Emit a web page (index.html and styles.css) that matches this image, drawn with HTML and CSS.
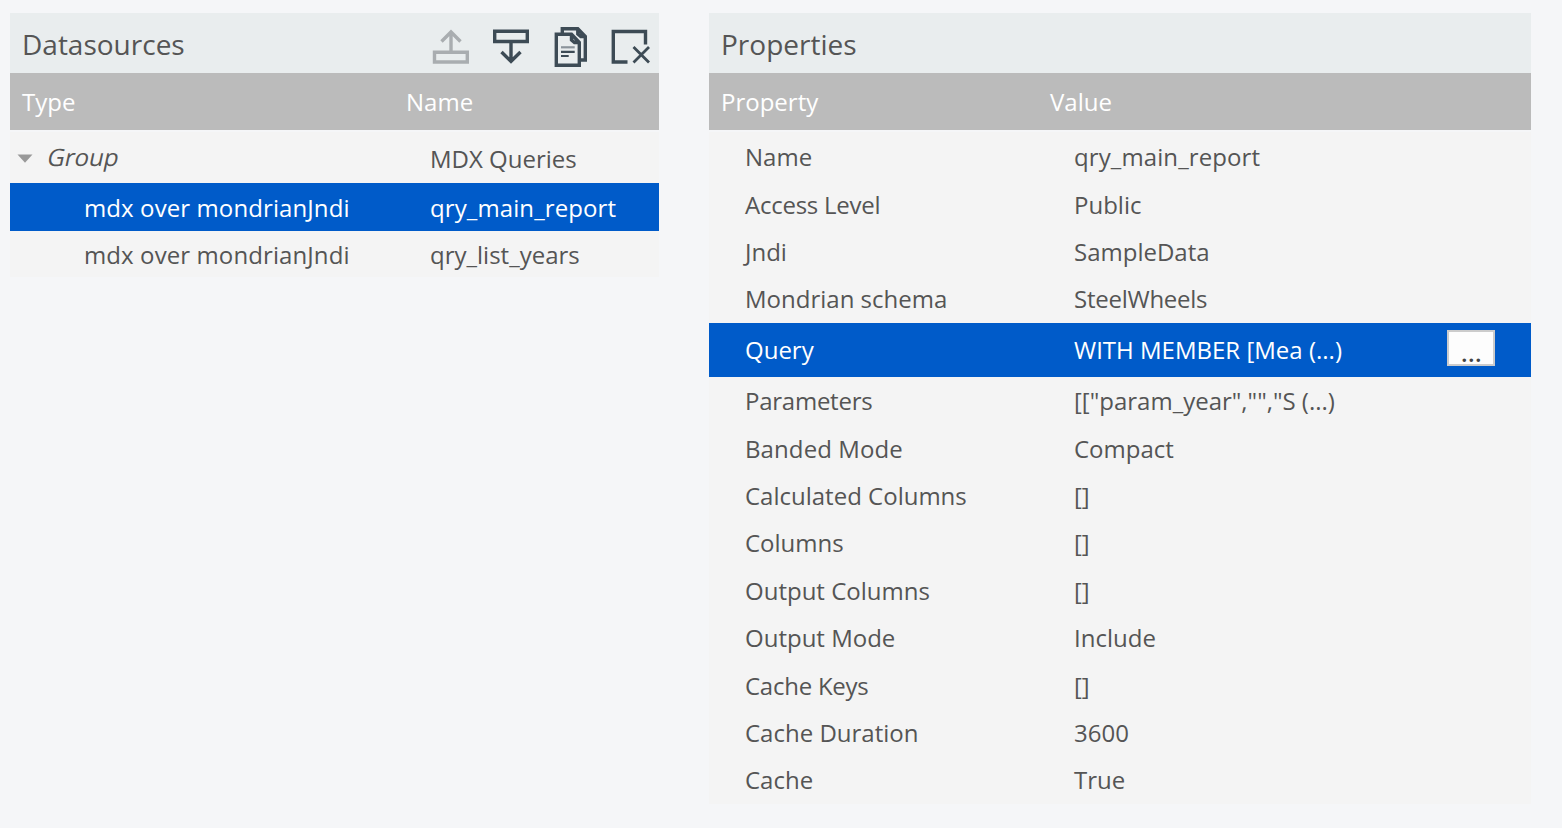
FILE: index.html
```html
<!DOCTYPE html>
<html lang="en">
<head>
<meta charset="utf-8">
<title>Datasources</title>
<link rel="stylesheet" href="styles.css">
</head>
<body>
<main class="workspace">
  <section class="panel datasources">
    <header class="panel-title">
      <h2>Datasources</h2>
      <div class="toolbar">
        <svg class="icon disabled" viewBox="0 0 40 60"><path d="M3.5 39.2h32.8v9.8H3.5zM20 38V19.5M10.5 28.5L20 19l9.500 9.500"/></svg>
        <svg class="icon" viewBox="0 0 40 60"><path d="M3.700 18.200h32.600v10.300H3.700zM20 29v19M10.500 39l9.500 9.300 9.500-9.300"/></svg>
        <svg class="icon" viewBox="0 0 40 60"><path d="M5.300 21.300H20.500L28.300 29.500V52.200H5.300zM20.500 21.500v5.500l3 2.500h4.500M11.300 20.500V15.700H26.800L34.300 23.500V47H29.500M26.800 16v5l3 2.500h4.500"/><path class="fine" d="M10 38.800h13.700M10 43h7.700"/><path class="fine pale" d="M10 34.300h13.700"/></svg>
        <svg class="icon" viewBox="0 0 40 60"><path d="M34.500 31.500V18.500H2.300V49H16.500"/><path class="cross" d="M22.500 34l15.500 15.500M38 34L22.500 49.500"/></svg>
      </div>
    </header>
    <div class="row head"><span>Type</span><span>Name</span></div>
    <div class="rows">
      <div class="row group"><span class="group-label"><svg class="arrow" viewBox="0 0 16 9"><path d="M.5.500h15L8 8.800z"/></svg><span class="slanted">Group</span></span><span>MDX Queries</span></div>
      <div class="row child selected"><span class="loose">mdx over mondrianJndi</span><span class="loose">qry_main_report</span></div>
      <div class="row child"><span class="loose">mdx over mondrianJndi</span><span>qry_list_years</span></div>
    </div>
  </section>
  <section class="panel properties">
    <header class="panel-title"><h2>Properties</h2></header>
    <div class="row head"><span>Property</span><span>Value</span></div>
    <div class="rows">
      <div class="row"><span>Name</span><span class="loose">qry_main_report</span></div>
      <div class="row"><span class="tight">Access Level</span><span>Public</span></div>
      <div class="row"><span>Jndi</span><span>SampleData</span></div>
      <div class="row"><span>Mondrian schema</span><span class="tight">SteelWheels</span></div>
      <div class="row selected"><span>Query</span><span>WITH MEMBER [Mea (...)</span><button class="more">...</button></div>
      <div class="row"><span class="tight">Parameters</span><span>[["param_year","","S (...)</span></div>
      <div class="row"><span class="loose">Banded Mode</span><span>Compact</span></div>
      <div class="row"><span>Calculated Columns</span><span>[]</span></div>
      <div class="row"><span>Columns</span><span>[]</span></div>
      <div class="row"><span>Output Columns</span><span>[]</span></div>
      <div class="row"><span>Output Mode</span><span>Include</span></div>
      <div class="row"><span class="tight">Cache Keys</span><span>[]</span></div>
      <div class="row"><span>Cache Duration</span><span>3600</span></div>
      <div class="row"><span>Cache</span><span>True</span></div>
    </div>
  </section>
</main>
</body>
</html>
```
FILE: styles.css
```css
* { box-sizing: border-box; }
body {
  margin: 0;
  background: #f5f6f8;
  color: #555;
  font: 24px/33px "Open Sans", sans-serif;
}
.workspace {
  display: flex;
  align-items: flex-start;
  gap: 50px;
  padding: 13px 0 0 10px;
}
.datasources { width: 649px; }
.properties { width: 822px; }
.panel-title {
  display: flex;
  justify-content: space-between;
  height: 60px;
  padding: 0 8px 0 12px;
  background: #e9edee;
}
h2 { margin: 0; font-size: 28px; font-weight: 400; line-height: 63px; }
.toolbar { display: flex; gap: 20px; }
.icon {
  width: 40px;
  height: 60px;
  fill: none;
  stroke: #3d4b55;
  stroke-width: 3.4;
}
.icon.disabled { stroke: #a9adb0; }
.icon .fine { stroke-width: 2.2; }
.icon .pale { stroke: #8b949b; }
.icon .cross { stroke-width: 2.8; }
.row { display: grid; align-items: center; white-space: pre; }
.datasources .row { grid-template-columns: 384px 1fr; }
.properties .row { grid-template-columns: 329px 373px auto; justify-content: start; }
.row.head {
  height: 57px;
  padding-left: 12px;
  background: #bbb;
  color: #fff;
}
.rows { margin-top: 2px; background: #f4f4f4; }
.properties .rows { padding-top: 1px; }
.properties .rows .row { height: 47.400px; padding-left: 36px; }
.properties .rows .selected { height: 54.48px; }
.datasources .rows .row { height: 46px; grid-template-columns: 336px 1fr; padding-left: 84px; }
.datasources .rows .child { padding-left: 74px; grid-template-columns: 346px 1fr; }
.datasources .rows .group { height: 51px; grid-template-columns: 413px 1fr; padding-left: 7px; padding-top: 1px; }
.datasources .rows .selected { height: 48px; }
.group-label { display: flex; align-items: center; margin-top: -4px; }
.arrow { width: 16px; height: 9px; margin: 5px 15px 0 0; fill: #999; }
.slanted { transform: skewX(-12deg); }
.loose { letter-spacing: .1px; }
.tight { letter-spacing: -.25px; }
.row.selected { background: #005bc9; color: #fff; }
.more {
  width: 48px;
  height: 36px;
  margin: -4px 0 0;
  padding: 9px 0 0 1px;
  border: 2px solid #ccc;
  background: #fdfdfd;
  color: #444;
  font: 600 24px/24px "Open Sans", sans-serif;
  letter-spacing: .5px;
}
```
